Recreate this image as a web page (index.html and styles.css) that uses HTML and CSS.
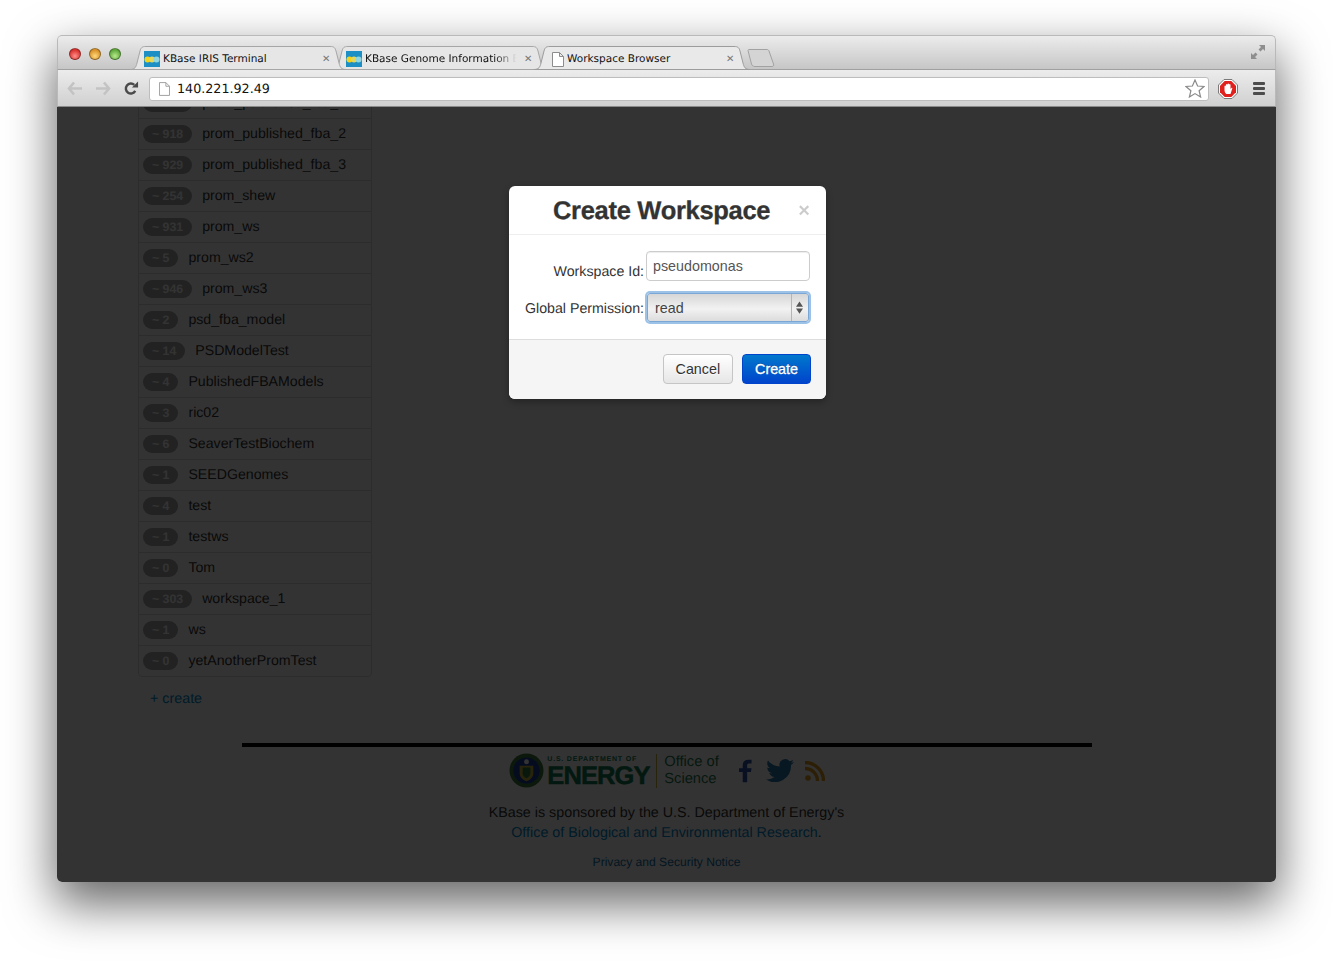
FILE: index.html
```html
<!DOCTYPE html>
<html lang="en">
<head>
  <meta charset="UTF-8" />
  <title>Workspace Browser</title>
  <link rel="stylesheet" href="styles.css">
</head>
<body>
  <div class="window">
    <div class="titlebar">
      <div class="lights">
        <span class="light red"></span>
        <span class="light yellow"></span>
        <span class="light green"></span>
      </div>
      <div class="tabs">
        <div class="tab tab-first">
          <svg class="tab-shape" viewBox="0 0 216 24"><path d="M0 23.5C5 23.5 6 21 7 17L10 5C11 1.5 12 .5 16 .5H200C204 .5 205 1.5 206 5L209 17C210 21 211 23.5 216 23.5Z"/></svg>
          <svg class="favicon" viewBox="0 0 16 16"><rect width="16" height="16" fill="#1c8fc4"/><circle cx="3.5" cy="8.5" r="3" fill="#f4d31f"/><circle cx="8" cy="8.5" r="3" fill="#e5d75a"/><circle cx="12.5" cy="8.5" r="3" fill="#8fd6e0"/></svg>
          <span class="tab-title">KBase IRIS Terminal</span>
          <span class="tab-close">&#10005;</span>
        </div>
        <div class="tab">
          <svg class="tab-shape" viewBox="0 0 216 24"><path d="M0 23.5C5 23.5 6 21 7 17L10 5C11 1.5 12 .5 16 .5H200C204 .5 205 1.5 206 5L209 17C210 21 211 23.5 216 23.5Z"/></svg>
          <svg class="favicon" viewBox="0 0 16 16"><rect width="16" height="16" fill="#1c8fc4"/><circle cx="3.5" cy="8.5" r="3" fill="#f4d31f"/><circle cx="8" cy="8.5" r="3" fill="#e5d75a"/><circle cx="12.5" cy="8.5" r="3" fill="#8fd6e0"/></svg>
          <span class="tab-title tab-fade">KBase Genome Information B</span>
          <span class="tab-close">&#10005;</span>
        </div>
        <div class="tab tab-active">
          <svg class="tab-shape" viewBox="0 0 216 24"><path d="M0 23.5C5 23.5 6 21 7 17L10 5C11 1.5 12 .5 16 .5H200C204 .5 205 1.5 206 5L209 17C210 21 211 23.5 216 23.5Z"/></svg>
          <svg class="favicon doc" viewBox="0 0 12 15"><path d="M.5.5H7.5L11.5 4.5V14.5H.5ZM7.5.5V4.5H11.5" fill="#fff" stroke="#8c8c8c"/></svg>
          <span class="tab-title">Workspace Browser</span>
          <span class="tab-close">&#10005;</span>
        </div>
        <svg class="new-tab" viewBox="0 0 28 18"><path d="M1 1.5C1 1 1.500 .5 2 .5H20C21 .5 21.500 1 22 2L26.500 15C27 16.500 26.500 17.500 25 17.500H8C6 17.500 5 16.500 4.500 15Z"/></svg>
      </div>
      <svg class="expand" viewBox="0 0 14 14"><path d="M14 0V6L12 4 9.500 6.500 7.500 4.500 10 2 8 0ZM0 14V8L2 10 4.500 7.500 6.500 9.500 4 12 6 14Z" fill="#8e8e8e"/></svg>
    </div>

    <div class="toolbar">
      <svg class="nav-icon" viewBox="0 0 16 14"><path d="M7 1 2 7l5 6M2.500 7H15" fill="none" stroke="#c3c3c3" stroke-width="2.600"/></svg>
      <svg class="nav-icon" viewBox="0 0 16 14"><path d="M9 1l5 6-5 6M13.500 7H1" fill="none" stroke="#c3c3c3" stroke-width="2.600"/></svg>
      <svg class="nav-icon" viewBox="0 0 16 16"><path d="M12.500 10.500A5.300 5.300 0 1 1 11.500 4.200" fill="none" stroke="#4a4a4a" stroke-width="2.600"/><path d="M9 7h6.500V.5Z" fill="#4a4a4a"/></svg>
      <div class="omnibox">
        <svg class="omni-doc" viewBox="0 0 12 15"><path d="M.5.5H7.500L11.500 4.500V14.500H.5ZM7.500.5V4.500H11.500" fill="#fff" stroke="#999"/></svg>
        <span class="url">140.221.92.49</span>
        <svg class="star" viewBox="0 0 20 19"><path d="M10 1l2.600 6 6.400.5-4.900 4.200 1.500 6.300L10 14.600 4.400 18l1.500-6.300L1 7.500 7.400 7Z" fill="#fff" stroke="#8a8a8a" stroke-width="1.200"/></svg>
      </div>
      <svg class="adblock" viewBox="0 0 20 20"><path d="M6 .5H14L19.500 6V14L14 19.500H6L.5 14V6Z" fill="#fff" stroke="#7a7a7a"/><path d="M6.700 2H13.300L18 6.700V13.300L13.300 18H6.700L2 13.300V6.700Z" fill="#e0201c"/><path d="M6.500 7.500c0-1.500 1.500-1.500 1.500 0V6c0-1.500 1.500-1.500 1.500 0V5.500c0-1.300 1.500-1.300 1.500 0V6c0-1.300 1.500-1.300 1.500 0v4l.8-1c.7-.6 1.300 0 .9.700L12.500 15H8.500C7 14 6.500 12.500 6.500 11Z" fill="#fff"/></svg>
      <div class="menu-icon"><span></span><span></span><span></span></div>
    </div>

    <div class="viewport">
      <div class="page">
        <ul class="ws-list">
          <li><span class="badge">~ 917</span>prom_published_fba_1</li>
          <li><span class="badge">~ 918</span>prom_published_fba_2</li>
          <li><span class="badge">~ 929</span>prom_published_fba_3</li>
          <li><span class="badge">~ 254</span>prom_shew</li>
          <li><span class="badge">~ 931</span>prom_ws</li>
          <li><span class="badge">~ 5</span>prom_ws2</li>
          <li><span class="badge">~ 946</span>prom_ws3</li>
          <li><span class="badge">~ 2</span>psd_fba_model</li>
          <li><span class="badge">~ 14</span>PSDModelTest</li>
          <li><span class="badge">~ 4</span>PublishedFBAModels</li>
          <li><span class="badge">~ 3</span>ric02</li>
          <li><span class="badge">~ 6</span>SeaverTestBiochem</li>
          <li><span class="badge">~ 1</span>SEEDGenomes</li>
          <li><span class="badge">~ 4</span>test</li>
          <li><span class="badge">~ 1</span>testws</li>
          <li><span class="badge">~ 0</span>Tom</li>
          <li><span class="badge">~ 303</span>workspace_1</li>
          <li><span class="badge">~ 1</span>ws</li>
          <li><span class="badge">~ 0</span>yetAnotherPromTest</li>
        </ul>
        <a class="create-link">+ create</a>

        <div class="footer">
          <div class="footer-rule"></div>
          <div class="logos">
            <svg class="seal" viewBox="0 0 36 36">
              <circle cx="18" cy="18" r="17.500" fill="#3c7a3c"/>
              <circle cx="18" cy="18" r="13.500" fill="#1a3c9c"/>
              <path d="M11 13H25V21C25 25 21 28 18 29 15 28 11 25 11 21Z" fill="#c9b23a"/>
              <path d="M14 15H22V21C22 23 20 25 18 26 16 25 14 23 14 21Z" fill="#2e7a3c"/>
              <circle cx="18" cy="9" r="2.500" fill="#fff"/>
            </svg>
            <div class="energy">
              <span class="energy-top">U.S. DEPARTMENT OF</span>
              <span class="energy-main">ENERGY</span>
            </div>
            <div class="office">Office of<br>Science</div>
            <svg class="social fb" viewBox="0 0 14 24"><path d="M4 24V13H0V9H4V6C4 2 6.500 0 10 0H13.500V4H11C9.500 4 8.800 4.700 8.800 6V9H13.500L12.800 13H8.800V24Z" fill="#2a4fa8"/></svg>
            <svg class="social tw" viewBox="0 0 28 23"><path d="M28 3c-1 .5-2 .8-3.300 1 1.200-.7 2-1.800 2.500-3.100-1.100.7-2.400 1.100-3.600 1.400A5.700 5.700 0 0 0 13.700 7.500 16 16 0 0 1 2 1.500a5.700 5.700 0 0 0 1.800 7.600c-1 0-1.800-.3-2.600-.7 0 2.800 2 5.100 4.600 5.600-.8.200-1.700.3-2.600.1.800 2.300 2.800 3.900 5.300 4A11.500 11.500 0 0 1 0 20.500 16.200 16.200 0 0 0 25 6c1.200-.8 2.200-1.800 3-3Z" fill="#2a7aa8"/></svg>
            <svg class="social rss" viewBox="0 0 20 20"><circle cx="3" cy="17" r="2.800" fill="#d99a1e"/><path d="M0 7.500A12.500 12.500 0 0 1 12.500 20M0 1.500A18.500 18.500 0 0 1 18.500 20" fill="none" stroke="#d99a1e" stroke-width="3.400"/></svg>
          </div>
          <p class="sponsor">KBase is sponsored by the U.S. Department of Energy's<br><a class="link">Office of Biological and Environmental Research</a>.</p>
          <a class="privacy">Privacy and Security Notice</a>
        </div>
      </div>

      <div class="backdrop"></div>

      <div class="modal">
        <div class="modal-header">
          <h3>Create Workspace</h3>
          <span class="modal-close">&times;</span>
        </div>
        <div class="modal-body">
          <label class="field-label label-id">Workspace Id:</label>
          <input class="field-input" type="text" value="pseudomonas">
          <label class="field-label label-perm">Global Permission:</label>
          <div class="select-wrap">
            <select class="field-select"><option>read</option></select>
            <svg class="select-arrows" viewBox="0 0 8 14"><path d="M4 0 8 6H0ZM4 14 0 8H8Z" fill="#555"/></svg>
          </div>
        </div>
        <div class="modal-footer">
          <button class="btn">Cancel</button>
          <button class="btn btn-primary">Create</button>
        </div>
      </div>
    </div>
  </div>
</body>
</html>
```

FILE: styles.css
```css
html, body {
  margin: 0;
  padding: 0;
}
body {
  height: 961px;
  background: #fff;
  padding: 35px 57px 0;
  box-sizing: border-box;
  overflow: hidden;
  font-family: "Liberation Sans", Arial, sans-serif;
  text-rendering: geometricPrecision;
}
.window {
  width: 1219px;
  height: 847px;
  border-radius: 5px;
  box-shadow: 0 20px 48px 2px rgba(0,0,0,0.6);
  display: flex;
  flex-direction: column;
}

/* browser chrome */
.titlebar {
  height: 35px;
  flex: none;
  display: flex;
  align-items: flex-end;
  box-sizing: border-box;
  border: 1px solid #b9b9b9;
  border-bottom: 1px solid #a0a0a0;
  border-radius: 5px 5px 0 0;
  background: linear-gradient(#ececec, #c6c6c6);
}
.lights {
  display: flex;
  gap: 8px;
  align-self: flex-start;
  padding: 12px 0 0 11px;
  width: 62px;
  flex: none;
}
.light {
  width: 12px;
  height: 12px;
  border-radius: 50%;
  border: 1px solid rgba(0,0,0,0.35);
  box-sizing: border-box;
}
.red { background: radial-gradient(circle at 50% 70%, #ff8f8a, #d9322e 70%); }
.yellow { background: radial-gradient(circle at 50% 70%, #ffd97a, #d9922a 70%); }
.green { background: radial-gradient(circle at 50% 70%, #b8ea8c, #5fa83c 70%); }
.tabs {
  display: flex;
  align-items: flex-end;
  height: 24px;
  flex: none;
  margin: 0 0 -1px -1px;
}
.tab {
  position: relative;
  width: 216px;
  height: 24px;
  margin-right: -14px;
  display: flex;
  align-items: center;
  padding: 2px 6px 0 14px;
  box-sizing: border-box;
  font-family: "DejaVu Sans", sans-serif;
  font-size: 10.5px;
  color: #111;
  z-index: 1;
}
.tab-first { z-index: 2; }
.tab-active { z-index: 3; }
.tab-shape {
  position: absolute;
  left: 0;
  top: 0;
  width: 216px;
  height: 24px;
}
.tab-shape path {
  fill: #e6e6e6;
  stroke: #a6a6a6;
}
.tab-active .tab-shape path {
  fill: #e9e9e9;
  stroke: #9c9c9c;
}
.favicon {
  position: relative;
  width: 16px;
  height: 16px;
  flex: none;
  margin-right: 3px;
}
.favicon.doc {
  width: 12px;
  height: 15px;
  margin: 0 3px 0 4px;
}
.tab-title {
  position: relative;
  flex: 1;
  min-width: 0;
  white-space: nowrap;
  overflow: hidden;
}
.tab-fade {
  -webkit-mask-image: linear-gradient(to right, #000 85%, transparent 99%);
}
.tab-close {
  position: relative;
  flex: none;
  width: 12px;
  margin: 0 6px 0 6px;
  font-size: 10px;
  color: #777;
}
.new-tab {
  width: 28px;
  height: 18px;
  margin: 0 0 3px 11px;
  position: relative;
  z-index: 0;
}
.new-tab path {
  fill: #d4d4d4;
  stroke: #a2a2a2;
}
.expand {
  width: 14px;
  height: 14px;
  margin: 0 10px 10px auto;
  align-self: flex-end;
}
.toolbar {
  height: 37px;
  flex: none;
  display: flex;
  align-items: center;
  box-sizing: border-box;
  padding: 1px 10px 0 9px;
  background: linear-gradient(#ececec, #d0d0d0);
  border-left: 1px solid #b9b9b9;
  border-right: 1px solid #b9b9b9;
  border-bottom: 1px solid #8a8a8a;
}
.nav-icon {
  width: 16px;
  height: 15px;
  margin-right: 12px;
  flex: none;
}
.omnibox {
  flex: none;
  width: 1060px;
  height: 24px;
  margin-left: -2px;
  box-sizing: border-box;
  display: flex;
  align-items: center;
  background: #fff;
  border: 1px solid #bdbdbd;
  border-radius: 3px;
  padding: 0 3px 0 9px;
}
.omni-doc {
  width: 11px;
  height: 14px;
  flex: none;
}
.url {
  margin-left: 7px;
  font-family: "DejaVu Sans", sans-serif;
  font-size: 12.7px;
  color: #111;
}
.star {
  width: 20px;
  height: 19px;
  margin-left: auto;
}
.adblock {
  width: 20px;
  height: 20px;
  margin-left: 9px;
  flex: none;
}
.menu-icon {
  width: 13px;
  margin-left: 15px;
  display: flex;
  flex-direction: column;
  gap: 2px;
}
.menu-icon span {
  height: 3px;
  background: #4c4c4c;
  border-radius: 1px;
}

/* page */
.viewport {
  position: relative;
  flex: 1;
  overflow: hidden;
  background: #fff;
  border-radius: 0 0 5px 5px;
}
.page {
  margin-top: -20px;
  color: #333;
  font-size: 14.3px;
}
.ws-list {
  list-style: none;
  margin: 0 0 0 81px;
  padding: 0;
  width: 234px;
  box-sizing: border-box;
  border: 1px solid #ddd;
  border-radius: 4px;
  font-size: 14.15px;
}
.ws-list li {
  height: 31px;
  box-sizing: border-box;
  display: flex;
  align-items: center;
  padding: 0 4px 2px;
  border-top: 1px solid #ddd;
}
.ws-list li:first-child {
  border-top: none;
  height: 30px;
}
.badge {
  background: #a8a8a8;
  color: #fff;
  font-size: 12.3px;
  font-weight: bold;
  height: 18px;
  line-height: 18px;
  border-radius: 9px;
  padding: 0 9px;
  margin: 2px 10px 0 0;
  white-space: nowrap;
}
.create-link {
  display: block;
  margin: 13px 0 0 93px;
  line-height: 18px;
  color: #08c;
}
.footer {
  margin-top: 35px;
  display: flex;
  flex-direction: column;
  align-items: center;
}
.footer-rule {
  width: 850px;
  height: 4px;
  background: #000;
  margin-left: 1px;
}
.logos {
  display: flex;
  align-items: center;
  height: 47px;
  margin-left: 1px;
}
.seal {
  width: 35px;
  height: 35px;
  margin-right: 3px;
}
.energy {
  display: flex;
  flex-direction: column;
  width: 105px;
  color: #0a7a50;
  font-weight: bold;
  white-space: nowrap;
}
.energy-top {
  font-size: 7px;
  letter-spacing: 0.8px;
  line-height: 8px;
  margin-top: 2px;
}
.energy-main {
  font-size: 25.5px;
  line-height: 24px;
  letter-spacing: -0.9px;
  -webkit-text-stroke: 0.5px #0a7a50;
}
.office {
  border-left: 1px solid #c9b23a;
  padding-left: 7px;
  margin-left: 4px;
  font-size: 14.7px;
  line-height: 17px;
  color: #1f7a50;
}
.social {
  flex: none;
}
.fb {
  width: 13px;
  height: 24px;
  margin-left: 20px;
}
.tw {
  width: 28px;
  height: 23px;
  margin-left: 14px;
}
.rss {
  width: 20px;
  height: 20px;
  margin-left: 11px;
}
.sponsor {
  margin: 9px 0 0;
  line-height: 20px;
  text-align: center;
  white-space: nowrap;
}
.link {
  color: #08c;
}
.privacy {
  margin-top: 10px;
  font-size: 12.1px;
  line-height: 18px;
  color: #0f6fa8;
}

/* dialog */
.backdrop {
  position: absolute;
  left: 0;
  top: 0;
  right: 0;
  bottom: 0;
  background: rgba(0,0,0,0.8);
}
.modal {
  position: absolute;
  left: 452px;
  top: 79px;
  width: 317px;
  background: #fff;
  border-radius: 6px;
  box-shadow: 0 3px 7px rgba(0,0,0,0.3);
  overflow: hidden;
  color: #333;
}
.modal-header {
  height: 49px;
  box-sizing: border-box;
  border-bottom: 1px solid #eee;
  display: flex;
  align-items: center;
  padding: 1px 16px 0 44px;
}
.modal-header h3 {
  margin: 0;
  font-size: 25.5px;
  line-height: 30px;
  letter-spacing: -0.3px;
  font-weight: bold;
  -webkit-text-stroke: 0.3px #333;
}
.modal-close {
  margin-left: auto;
  font-size: 20px;
  font-weight: bold;
  line-height: 20px;
  color: #000;
  opacity: 0.2;
}
.modal-body {
  height: 105px;
  box-sizing: border-box;
  padding: 16px 16px 0 16px;
  display: grid;
  grid-template-columns: 119px 164px;
  grid-template-rows: 30px 30px;
  row-gap: 12px;
  column-gap: 2px;
  border-bottom: 1px solid #ddd;
}
.field-label {
  font-size: 14.2px;
  line-height: 20px;
  text-align: right;
  align-self: end;
  white-space: nowrap;
}
.label-id {
  margin-bottom: -1px;
}
.label-perm {
  align-self: center;
  margin-top: 2px;
}
.field-input {
  width: 164px;
  height: 30px;
  box-sizing: border-box;
  border: 1px solid #ccc;
  border-radius: 4px;
  padding: 0 6px;
  font-family: inherit;
  font-size: 14.3px;
  color: #555;
  box-shadow: inset 0 1px 1px rgba(0,0,0,0.075);
}
.select-wrap {
  position: relative;
  width: 162px;
  height: 29px;
  margin: 0 1px;
}
.field-select {
  appearance: none;
  -webkit-appearance: none;
  display: block;
  width: 100%;
  height: 100%;
  box-sizing: border-box;
  border: 1px solid #7aa7d6;
  border-radius: 3px;
  padding: 0 7px;
  font-family: inherit;
  font-size: 14.3px;
  color: #444;
  background: linear-gradient(to right, transparent 143px, #b5b5b5 143px, #b5b5b5 144px, transparent 144px), linear-gradient(#d6d6d6, #f2f2f2 55%, #dcdcdc);
  box-shadow: 0 0 0 2px #9cc2e8;
}
.select-arrows {
  position: absolute;
  right: 6px;
  top: 8px;
  width: 7px;
  height: 13px;
}
.modal-footer {
  height: 59px;
  box-sizing: border-box;
  background: #f5f5f5;
  display: flex;
  justify-content: flex-end;
  align-items: flex-start;
  gap: 9px;
  padding: 14px 15px 0 0;
}
.btn {
  height: 30px;
  box-sizing: border-box;
  padding: 0 12px;
  font-family: inherit;
  font-size: 14.3px;
  color: #333;
  border: 1px solid #c5c5c5;
  border-radius: 4px;
  background: linear-gradient(#fff, #e6e6e6);
  text-shadow: 0 1px 1px rgba(255,255,255,0.75);
}
.btn-primary {
  color: #fff;
  border-color: #0044cc;
  background: linear-gradient(#0078cc, #0044cc);
  text-shadow: 0 -1px 0 rgba(0,0,0,0.25);
  -webkit-text-stroke: 0.3px #fff;
}
```
